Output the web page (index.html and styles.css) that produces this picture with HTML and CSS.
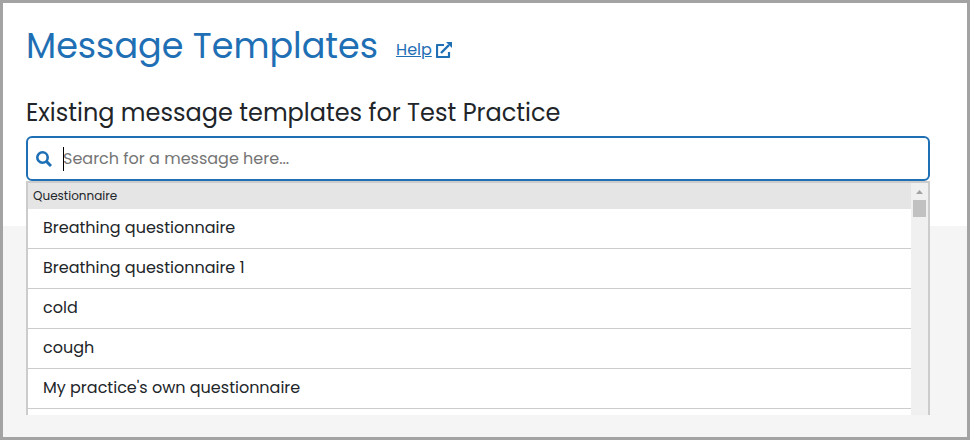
FILE: index.html
```html
<!DOCTYPE html>
<html lang="en">
<head>
    <meta charset="UTF-8">
    <meta name="viewport" content="width=device-width, initial-scale=1.0">
    <title>Message Templates</title>
    <link rel="stylesheet" href="styles.css">
</head>
<body>

<main class="templates">
    <header class="page-header">
        <h1>Message Templates</h1>
        <a class="help-link" href="#help">
            <span>Help</span>
            <svg viewBox="0 0 16 16" aria-hidden="true">
                <path d="M8 3H1V15H13V10" fill="none" stroke="currentColor" stroke-width="2.2" stroke-linejoin="round"/>
                <path d="M5 11L13 3" fill="none" stroke="currentColor" stroke-width="2.4"/>
                <path d="M10 0H16V6Z" fill="currentColor"/>
            </svg>
        </a>
    </header>

    <label class="section-title" for="search">Existing message templates for Test Practice</label>

    <div class="search">
        <div class="search-box">
            <svg class="search-icon" viewBox="0 0 16 16" aria-hidden="true">
                <circle cx="6.5" cy="6.5" r="5.2" fill="none" stroke="currentColor" stroke-width="2.6"/>
                <path d="M10.4 10.4L15 15" stroke="currentColor" stroke-width="3"/>
            </svg>
            <div class="search-field">
                <input id="search" type="text" placeholder="Search for a message here..." autocomplete="off">
                <span class="caret"></span>
            </div>
        </div>

        <div class="dropdown">
            <div class="results">
                <div class="group-name">Questionnaire</div>
                <ul>
                    <li>Breathing questionnaire</li>
                    <li>Breathing questionnaire 1</li>
                    <li>cold</li>
                    <li>cough</li>
                    <li>My practice's own questionnaire</li>
                    <li></li>
                </ul>
            </div>
            <div class="scrollbar" aria-hidden="true">
                <svg class="scroll-up" viewBox="0 0 17 17">
                    <path d="M5 11L8.5 7L12 11Z" fill="#a3a3a3"/>
                </svg>
                <div class="scroll-thumb"></div>
            </div>
        </div>
    </div>
</main>

</body>
</html>
```

FILE: styles.css
```css
* {
    box-sizing: border-box;
}

body {
    margin: 0;
    min-height: 100vh;
    border: 3px solid #a3a3a3;
    background-color: #f5f5f5;
    font-family: Poppins, Inter, sans-serif;
    font-size: 16px;
    color: #212529;
}

.templates {
    padding: 19px 37px 45px 23px;
    background-color: #fff;
}

.page-header {
    display: flex;
    align-items: center;
    gap: 18px;
    margin-bottom: 25px;
}

h1 {
    margin: 0;
    font-size: 35px;
    font-weight: 400;
    line-height: 48px;
    color: #1f6fb5;
}

.help-link {
    display: flex;
    align-items: center;
    gap: 4px;
    padding-top: 8px;
    color: #1f6fb5;
    line-height: 24px;
}

.help-link svg {
    width: 16px;
    height: 16px;
}

.section-title {
    display: block;
    margin-bottom: 5px;
    font-size: 24px;
    font-weight: 400;
    line-height: 36px;
}

/* search */
.search {
    position: relative;
}

.search-box {
    display: flex;
    align-items: center;
    gap: 11px;
    height: 45px;
    padding: 0 8px;
    border: 2px solid #1f6fb5;
    border-radius: 6px;
    background-color: #fff;
}

.search-icon {
    width: 16px;
    height: 16px;
    color: #1f6fb5;
}

.search-field {
    position: relative;
    flex: 1;
}

.search-field input {
    display: block;
    width: 100%;
    height: 24px;
    padding: 0;
    border: 0;
    outline: 0;
    background: none;
    font: inherit;
    color: inherit;
}

.search-field input::placeholder {
    color: #757575;
}

.caret {
    position: absolute;
    top: 0;
    left: 0;
    width: 1px;
    height: 24px;
    background-color: #000;
}

/* results list */
.dropdown {
    position: absolute;
    top: 100%;
    left: 0;
    right: 0;
    display: flex;
    max-height: 234px;
    overflow: hidden;
    border: 2px solid #ccc;
    border-bottom: 0;
    background-color: #fff;
}

.results {
    flex: 1;
}

.group-name {
    padding: 0 5px;
    background-color: #e5e5e5;
    font-size: 12px;
    line-height: 26px;
}

.results ul {
    margin: 0;
    padding: 0;
    list-style: none;
}

.results li {
    height: 40px;
    padding: 0 15px;
    border-bottom: 1px solid #ccc;
    line-height: 38px;
}

.scrollbar {
    width: 17px;
    background-color: #f0f0f0;
}

.scroll-up {
    display: block;
    width: 17px;
    height: 17px;
}

.scroll-thumb {
    height: 17px;
    margin: 0 2px;
    background-color: #c1c1c1;
}
```
